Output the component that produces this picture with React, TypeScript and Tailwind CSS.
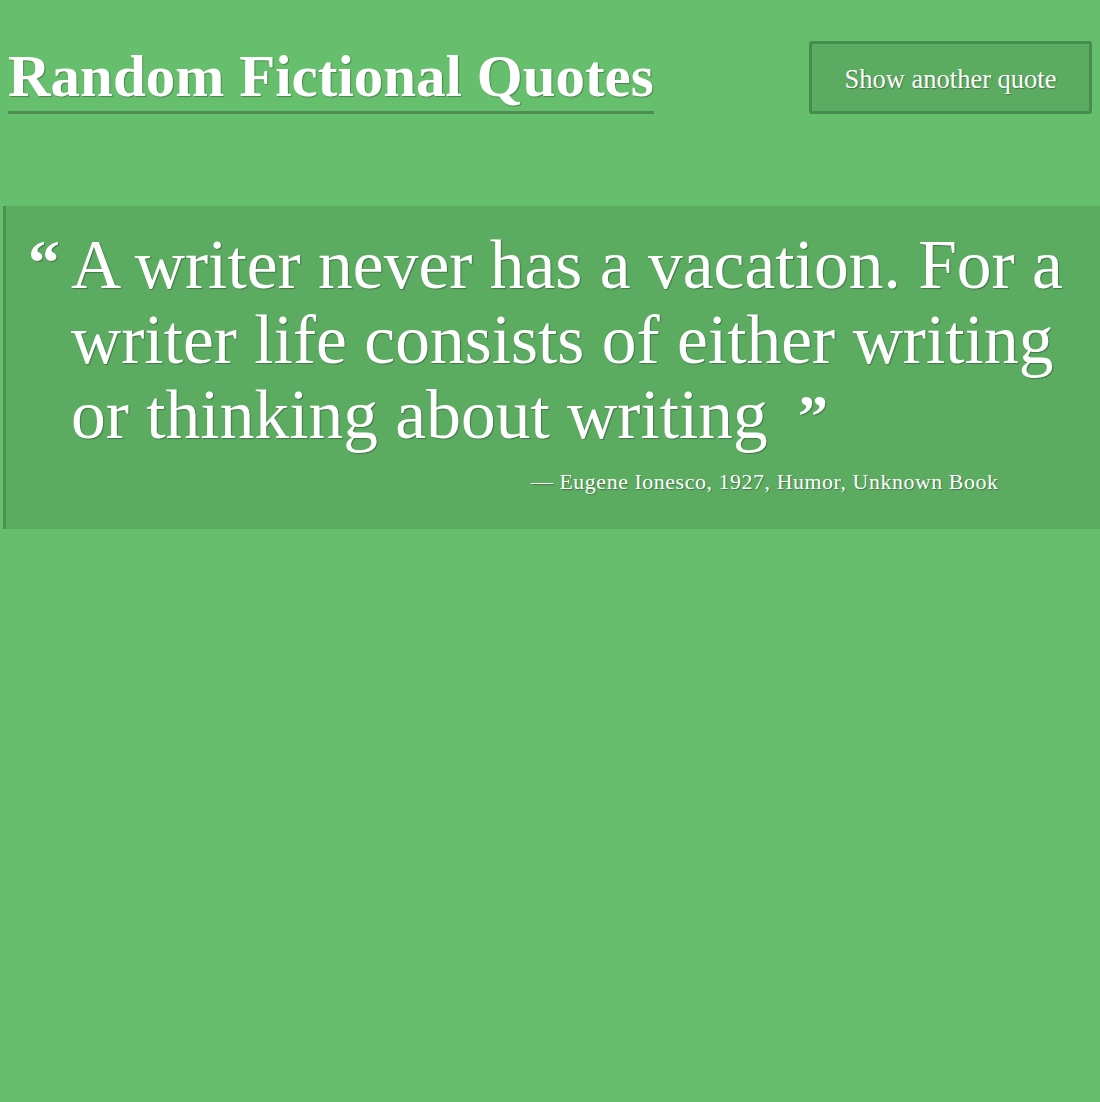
export default function App() {
  return (
    <div className="min-h-screen w-full bg-[#66bf6c] font-['Liberation_Serif',serif] text-white">
      {/* Header */}
      <header className="flex items-start justify-between pl-2 pr-2 pt-[41px]">
        <h1 className="mt-[1px] inline-block border-b-[3px] border-[#4d8f52] text-[59px] font-bold leading-[69px] [text-shadow:1px_1px_1px_rgba(0,0,0,0.3)]">
          Random Fictional Quotes
        </h1>
        <button className="h-[73px] w-[283px] rounded-[3px] border-[3px] border-[#478c4c] bg-[#5bab61] pt-[5px] text-[26.5px] [text-shadow:1px_1px_1px_rgba(0,0,0,0.3)]">
          Show another quote
        </button>
      </header>

      {/* Quote */}
      <section className="ml-[3px] mt-[92px] border-l-[3px] border-[#4d8f52] bg-[#5bab61] pb-[33px] pl-[22px] pr-4 pt-[21px] [text-shadow:1px_1px_1px_rgba(0,0,0,0.3)]">
        <div className="flex items-start gap-[11px]">
          <span className="mt-[12px] text-[64px] font-bold leading-[48px]">“</span>
          <p className="text-[69.5px] leading-[75px]">
            A writer never has a vacation. For a
            <br />
            writer life consists of either writing
            <br />
            or thinking about writing
            <span className="relative top-[-2px] ml-[30px] text-[60px] font-bold leading-none">”</span>
          </p>
        </div>
        <p className="mt-[16px] pl-[503px] text-[21.8px] leading-[28px] tracking-[0.6px]">
          — Eugene Ionesco, 1927, Humor, Unknown Book
        </p>
      </section>
    </div>
  );
}
